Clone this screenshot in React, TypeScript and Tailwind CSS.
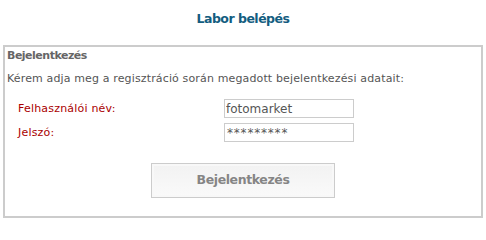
export default function App() {
  return (
    <div className="w-[486px] h-[221px] bg-white font-['DejaVu_Sans',Verdana,sans-serif] overflow-hidden">
      {/* Title */}
      <h1 className="pt-[11px] h-[45px] text-center text-[12.5px] leading-[16px] font-bold tracking-[-0.5px] text-[#135d80]">
        Labor belépés
      </h1>

      {/* Login box */}
      <div className="ml-[3px] w-[480px] h-[173px] border-2 border-[#cccccc]">
        <div className="pt-[2px] pl-[2px] text-[11px] leading-[14px] font-bold tracking-[-0.5px] text-[#666666]">
          Bejelentkezés
        </div>
        <p className="mt-[9px] pl-[2px] text-[11px] leading-[14px] tracking-[0.14px] text-[#555555]">
          Kérem adja meg a regisztráció során megadott bejelentkezési adatait:
        </p>

        <form className="mt-[13px] flex flex-col gap-[5px]" onSubmit={(e) => e.preventDefault()}>
          <div className="flex items-center">
            <label htmlFor="user" className="pl-[13px] w-[219px] text-[11px] leading-[14px] text-[#aa0000] tracking-[0.2px]">
              Felhasználói név:
            </label>
            <input
              id="user"
              type="text"
              defaultValue="fotomarket"
              className="w-[130px] h-[19px] border border-[#cccccc] px-[1px] text-[12px] leading-[14px] text-[#555555] outline-none selection:bg-transparent"
            />
          </div>
          <div className="flex items-center">
            <label htmlFor="pass" className="pl-[13px] w-[219px] text-[11px] leading-[14px] text-[#aa0000] tracking-[0.2px]">
              Jelszó:
            </label>
            <input
              id="pass"
              type="text"
              defaultValue="*********"
              className="w-[130px] h-[19px] border border-[#cccccc] px-[2px] text-[12px] leading-[14px] tracking-[0.8px] text-[#555555] outline-none selection:bg-transparent selection:text-[#555555]"
            />
          </div>

          <div className="mt-[16px] flex justify-center">
            <button
              type="submit"
              className="w-[184px] h-[35px] border border-[#cccccc] bg-gradient-to-b from-[#f2f2f2] to-[#fafafa] shadow-[inset_0_0_0_2px_#f8f8f8] text-[12.5px] font-bold tracking-[-0.4px] text-[#858585]"
            >
              Bejelentkezés
            </button>
          </div>
        </form>
      </div>
    </div>
  );
}
